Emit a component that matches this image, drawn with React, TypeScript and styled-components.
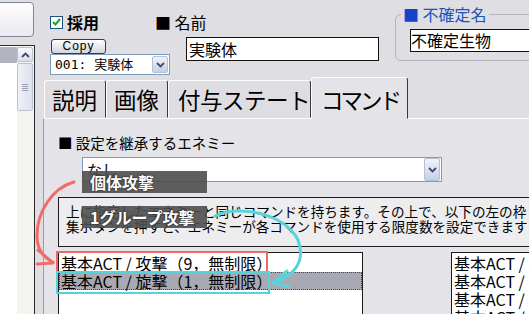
import styled, { createGlobalStyle } from 'styled-components';

const GlobalStyle = createGlobalStyle`
  html, body {
    margin: 0;
    padding: 0;
    background: #dfdfe3;
  }
  body {
    font-family: "Noto Sans CJK JP", "Noto Sans", sans-serif;
    color: #000;
  }
`;

const commands = ['基本ACT / 攻撃（9，無制限）', '基本ACT / 旋撃（1，無制限）'];
const sideCommands = ['基本ACT / 攻撃', '基本ACT / 旋撃', '基本ACT / 防御', '基本ACT / 逃走'];

function Chevron({ up = false }: { up?: boolean }) {
  return (
    <svg width="9" height="6" viewBox="0 0 9 6">
      <path
        d={up ? 'M1 5 L4.5 1.5 L8 5' : 'M1 1 L4.5 4.5 L8 1'}
        fill="none"
        stroke="#3d4d6e"
        strokeWidth="1.8"
      />
    </svg>
  );
}

export default function App() {
  return (
    <Screen>
      <GlobalStyle />
      <Sidebar>
        <SideButton />
        <SideList>
          <SideItems>
            <SideSelected />
          </SideItems>
          <ScrollBar>
            <ScrollUp>
              <Chevron up />
            </ScrollUp>
            <ScrollThumb>
              <Grip />
            </ScrollThumb>
          </ScrollBar>
        </SideList>
      </Sidebar>

      <Main>
        <Header>
          <ColA>
            <AdoptRow>
              <CheckBox>
                <svg width="9" height="8" viewBox="0 0 9 8">
                  <path d="M1 4 L3.5 6.5 L8 1" fill="none" stroke="#21a121" strokeWidth="2" />
                </svg>
              </CheckBox>
              採用
            </AdoptRow>
            <CopyButton>Copy</CopyButton>
            <EnemySelect>
              <span>001: 実験体</span>
              <DropButton $h={17}>
                <Chevron />
              </DropButton>
            </EnemySelect>
          </ColA>
          <ColB>
            <FieldLabel>■ 名前</FieldLabel>
            <NameInput>実験体</NameInput>
          </ColB>
          <UncertainSet>
            <Legend>
              <BlueSquare>■</BlueSquare> 不確定名
            </Legend>
            <UncertainInput>不確定生物</UncertainInput>
          </UncertainSet>
        </Header>

        <TabRow>
          <Tab $w={62}>説明</Tab>
          <Tab $w={62}>画像</Tab>
          <Tab $w={143} $tight={0.5}>
            付与ステート
          </Tab>
          <Tab $w={97} $tight={3} $active>
            コマンド
          </Tab>
        </TabRow>

        <Panel>
          <SectionTitle>■ 設定を継承するエネミー</SectionTitle>
          <InheritSelect>
            <span>なし</span>
            <DropButton $h={23}>
              <Chevron />
            </DropButton>
          </InheritSelect>
          <DescBox>
            上に指定したエネミーと同じコマンドを持ちます。その上で、以下の左の枠
            <br />
            集ボタンを押すと、エネミーが各コマンドを使用する限度数を設定できます
          </DescBox>
          <ListsRow>
            <CommandList $w={305}>
              {commands.map((c, i) => (
                <Row key={c} $selected={i === 1}>
                  {c}
                </Row>
              ))}
            </CommandList>
            <CommandList $w={100}>
              {sideCommands.map((c) => (
                <Row key={c}>{c}</Row>
              ))}
            </CommandList>
          </ListsRow>
        </Panel>
      </Main>

      <NoteTag $top={171}>個体攻撃</NoteTag>
      <NoteTag $top={206}>1グループ攻撃</NoteTag>
      <Overlay viewBox="0 0 529 314">
        <rect x="57" y="252" width="210" height="20" fill="none" stroke="#f06767" strokeWidth="2" />
        <rect x="57" y="272" width="212" height="21" fill="none" stroke="#55d2da" strokeWidth="2" />
        <path
          d="M74 182 C52 188 37 212 37 236 C37 250 44 258 53 262 M38 250 L53 263 L37 264"
          fill="none"
          stroke="#f26b6b"
          strokeWidth="3"
          strokeLinecap="round"
          strokeLinejoin="round"
        />
        <path
          d="M215 216 C240 204 285 214 298 240 C306 262 294 276 273 283 M287 271 L273 283 L289 287"
          fill="none"
          stroke="#58d4dc"
          strokeWidth="3"
          strokeLinecap="round"
          strokeLinejoin="round"
        />
      </Overlay>
    </Screen>
  );
}

const Screen = styled.div`
  position: relative;
  display: flex;
  width: 529px;
  height: 314px;
  overflow: hidden;
  background: #dfdfe3;
`;

const Sidebar = styled.div`
  width: 43px;
  flex-shrink: 0;
  display: flex;
  flex-direction: column;
`;

const SideButton = styled.div`
  margin: 2px 0 0 -6px;
  width: 40px;
  height: 35px;
  box-sizing: border-box;
  border: 1px solid #7d879a;
  border-radius: 4px;
  background: linear-gradient(#fdfdfd, #eaeaef);
`;

const SideList = styled.div`
  margin-top: 8px;
  width: 35px;
  flex: 1;
  box-sizing: border-box;
  border-top: 1px solid #2a2a2a;
  border-right: 1px solid #2a2a2a;
  display: flex;
  background: #fff;
`;

const SideItems = styled.div`
  width: 17px;
  padding-top: 1px;
`;

const SideSelected = styled.div`
  height: 16px;
  background: #b3b3bd;
`;

const ScrollBar = styled.div`
  flex: 1;
  display: flex;
  flex-direction: column;
  background: #f3f3ef;
`;

const ScrollUp = styled.div`
  height: 15px;
  margin: 1px 1px 0 0;
  box-sizing: border-box;
  border: 1px solid #b9c3d6;
  border-radius: 2px;
  background: linear-gradient(#f7f8fb, #d9dfeb);
  display: flex;
  align-items: center;
  justify-content: center;
`;

const ScrollThumb = styled.div`
  height: 48px;
  margin: 1px 1px 0 0;
  box-sizing: border-box;
  border: 1px solid #b9c3d6;
  border-radius: 2px;
  background: linear-gradient(90deg, #eef0f6, #dde2ec);
  display: flex;
  align-items: center;
  justify-content: center;
`;

const Grip = styled.div`
  width: 6px;
  height: 7px;
  background: repeating-linear-gradient(#9aa3b5 0 1px, transparent 1px 2px);
`;

const Main = styled.div`
  flex: 1;
  min-width: 0;
  display: flex;
  flex-direction: column;
`;

const Header = styled.div`
  height: 77px;
  flex-shrink: 0;
  display: flex;
  padding-left: 7px;
`;

const ColA = styled.div`
  width: 105px;
  flex-shrink: 0;
  padding-top: 14px;
  display: flex;
  flex-direction: column;
  align-items: flex-start;
`;

const AdoptRow = styled.div`
  display: flex;
  align-items: center;
  gap: 4px;
  height: 16px;
  font-size: 16px;
  line-height: 16px;
  font-weight: bold;
`;

const CheckBox = styled.div`
  width: 13px;
  height: 13px;
  box-sizing: border-box;
  border: 1px solid #1c5180;
  background: #fff;
  display: flex;
  align-items: center;
  justify-content: center;
`;

const CopyButton = styled.div`
  margin: 9px 0 0 1px;
  width: 55px;
  height: 15px;
  box-sizing: border-box;
  border: 1px solid #2a3b5e;
  border-radius: 3px;
  background: linear-gradient(#ffffff, #d4d5dd);
  font: 12px/13px "Liberation Sans", sans-serif;
  letter-spacing: 1px;
  text-align: center;
`;

const EnemySelect = styled.div`
  width: 120px;
  height: 21px;
  flex-shrink: 0;
  box-sizing: border-box;
  border: 1px solid #7f9db9;
  background: #fff;
  display: flex;
  align-items: center;
  justify-content: space-between;
  padding: 0 1px 0 4px;
  font: 13px/19px "DejaVu Sans Mono", "Noto Sans CJK JP", monospace;
  white-space: nowrap;
`;

const DropButton = styled.div<{ $h: number }>`
  width: 16px;
  height: ${(p) => p.$h}px;
  box-sizing: border-box;
  border: 1px solid #b4c0d8;
  border-radius: 2px;
  background: linear-gradient(#f0f3fa, #c6d0e4);
  display: flex;
  align-items: center;
  justify-content: center;
`;

const ColB = styled.div`
  padding-top: 14px;
  flex-shrink: 0;
`;

const FieldLabel = styled.div`
  font-size: 16px;
  line-height: 16px;
  white-space: nowrap;
`;

const NameInput = styled.div`
  margin: 7px 0 0 31px;
  width: 193px;
  height: 24px;
  box-sizing: border-box;
  border: 1px solid #111;
  background: #fff;
  padding-left: 2px;
  font-size: 16px;
  line-height: 22px;
`;

const UncertainSet = styled.fieldset`
  margin: 5px 0 0 16px;
  padding: 0 0 8px 14px;
  border: 1px solid #b4b4ba;
  border-radius: 6px;
  width: 150px;
  flex-shrink: 0;
  align-self: flex-start;
`;

const Legend = styled.legend`
  margin-left: -9px;
  padding: 0 2px;
  font-size: 16px;
  line-height: 19px;
  color: #2152b8;
  white-space: nowrap;
`;

const BlueSquare = styled.span`
  color: #1444cc;
`;

const UncertainInput = styled.div`
  margin-top: 5px;
  width: 140px;
  height: 23px;
  box-sizing: border-box;
  border: 1px solid #111;
  background: #fff;
  font-size: 16px;
  line-height: 21px;
  white-space: nowrap;
`;

const TabRow = styled.div`
  position: relative;
  z-index: 1;
  height: 41px;
  flex-shrink: 0;
  display: flex;
  align-items: flex-end;
  padding-left: 1px;
`;

const Tab = styled.div<{ $w: number; $active?: boolean; $tight?: number }>`
  width: ${(p) => p.$w}px;
  height: ${(p) => (p.$active ? 42 : 38)}px;
  margin-bottom: ${(p) => (p.$active ? -1 : 0)}px;
  box-sizing: border-box;
  border: 1px solid;
  border-color: #fcfcfc #3a3a3a transparent #fcfcfc;
  border-radius: 3px 3px 0 0;
  background: ${(p) => (p.$active ? '#e4e4e8' : '#dedee2')};
  padding: ${(p) => (p.$active ? 10 : 7)}px 0 0 ${(p) => (p.$tight ? 9 : 7)}px;
  font-size: 22.5px;
  line-height: 23px;
  letter-spacing: ${(p) => -(p.$tight ?? 0)}px;
  white-space: nowrap;
  overflow: hidden;
`;

const Panel = styled.div`
  flex: 1;
  min-height: 0;
  display: flex;
  flex-direction: column;
  align-items: flex-start;
  border-top: 1px solid #fcfcfc;
  border-left: 1px solid #9c9ca4;
  background: #e4e4e8;
  padding: 16px 0 0 14px;
`;

const SectionTitle = styled.div`
  font-size: 14.5px;
  line-height: 15px;
  white-space: nowrap;
`;

const InheritSelect = styled.div`
  margin: 7px 0 0 24px;
  width: 360px;
  height: 25px;
  flex-shrink: 0;
  box-sizing: border-box;
  border: 1px solid #7f9db9;
  background: #fff;
  display: flex;
  align-items: center;
  justify-content: space-between;
  padding: 0 1px 0 4px;
  font-size: 15px;
  line-height: 20px;
`;

const DescBox = styled.div`
  margin-top: 15px;
  width: 480px;
  height: 50px;
  flex-shrink: 0;
  box-sizing: border-box;
  border: 1px solid #1c1c1c;
  background: #ededef;
  padding: 6px 0 0 7px;
  font-size: 13.6px;
  line-height: 15px;
  white-space: nowrap;
  overflow: hidden;
`;

const ListsRow = styled.div`
  margin-top: 5px;
  flex: 1;
  display: flex;
  gap: 88px;
`;

const CommandList = styled.div<{ $w: number }>`
  width: ${(p) => p.$w}px;
  flex-shrink: 0;
  box-sizing: border-box;
  border: 1px solid #1c1c1c;
  border-bottom: none;
  background: #fff;
  padding-top: 1px;
  overflow: hidden;
`;

const Row = styled.div<{ $selected?: boolean }>`
  height: 18px;
  padding-left: 2px;
  font-size: 16px;
  line-height: 18px;
  white-space: nowrap;
  background: ${(p) => (p.$selected ? '#a9a9b4' : 'transparent')};
  outline: ${(p) => (p.$selected ? '1px dotted #444' : 'none')};
  outline-offset: -1px;
`;

const NoteTag = styled.div<{ $top: number }>`
  position: absolute;
  left: 82px;
  top: ${(p) => p.$top}px;
  width: 125px;
  height: 22px;
  box-sizing: border-box;
  padding-left: 8px;
  background: rgba(78, 78, 78, 0.9);
  color: #fff;
  font-size: 16px;
  font-weight: bold;
  line-height: 22px;
  white-space: nowrap;
  text-shadow: 0 0 2px #000;
`;

const Overlay = styled.svg`
  position: absolute;
  left: 0;
  top: 0;
  width: 529px;
  height: 314px;
  pointer-events: none;
`;
